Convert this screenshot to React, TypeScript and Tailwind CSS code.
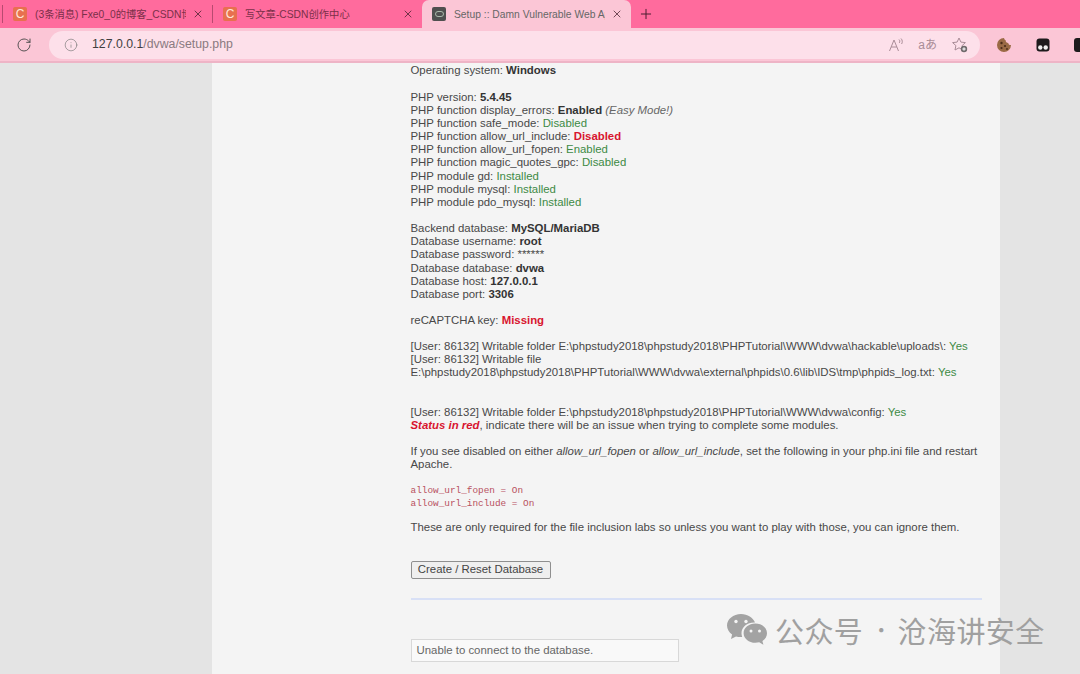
import { RotateCw, Info, X, Plus } from 'lucide-react'

const good = 'text-[#3d8a45]'

function Tab({ title, active, kind }: { title: string; active?: boolean; kind: 'csdn' | 'dvwa' }) {
  return (
    <div
      className={`flex h-[28px] w-[209px] items-center pl-[10px] pr-[8px] ${
        active ? 'rounded-t-[7px] bg-[#fbc6d6]' : 'bg-[#ff6b9d]'
      }`}
    >
      {kind === 'csdn' ? (
        <span className="flex h-[14px] w-[14px] shrink-0 items-center justify-center rounded-[2px] bg-[#e8704f] text-[12px] leading-none text-[#ffe8dc]">
          C
        </span>
      ) : (
        <span className="flex h-[14px] w-[14px] shrink-0 items-center justify-center rounded-[2px] bg-[#4f4f4f]">
          <span className="h-[6px] w-[9px] rounded-full border border-[#a9b8a9]" />
        </span>
      )}
      <span className={`ml-[8px] flex-1 overflow-hidden whitespace-nowrap pt-px text-[10.3px] ${active ? 'text-[#666]' : 'text-[#7a3049]'}`}>
        {title}
      </span>
      <X size={12} strokeWidth={1.5} className="ml-[6px] shrink-0 text-[#43202c]" />
    </div>
  )
}

function ReadAloudIcon() {
  return (
    <svg width="16" height="16" viewBox="0 0 16 16" fill="none" stroke="#a98c97" strokeWidth="1">
      <path d="M1.5 14 6 3l4.500 11M3.200 10h5.600" />
      <path d="M11 2.500c1 .9 1 2.300.3 3.400M13 1.500c1.600 1.600 1.600 3.900.6 5.500" />
    </svg>
  )
}

function FavIcon() {
  return (
    <svg width="18" height="18" viewBox="0 0 18 18" fill="none">
      <path d="M8 2l1.900 4.100 4.500.5-3.300 3 .9 4.400L8 11.800 4 14l.9-4.400-3.300-3 4.500-.5z" stroke="#a98c97" strokeWidth="1" />
      <circle cx="13" cy="13" r="3.200" fill="#6f6a6c" />
      <path d="M13 11.300v3.400M11.300 13h3.400" stroke="#fff" strokeWidth="1" />
    </svg>
  )
}

function CookieIcon() {
  return (
    <svg width="16" height="16" viewBox="0 0 16 16">
      <path d="M8 1a7 7 0 1 0 7 7c-1.500.3-2.600-.6-2.800-2C10.700 6 9.600 5 9.700 3.300 8.900 3 8.200 2.200 8 1z" fill="#9a6a45" />
      <circle cx="5.500" cy="6" r="1.200" fill="#4a2c18" />
      <circle cx="9" cy="9" r="1.100" fill="#4a2c18" />
      <circle cx="5.500" cy="11" r="1.100" fill="#4a2c18" />
      <circle cx="11" cy="12" r=".9" fill="#4a2c18" />
    </svg>
  )
}

function GhostIcon() {
  return (
    <svg width="14" height="14" viewBox="0 0 14 14">
      <rect x="0.5" y="0.5" width="13" height="13" rx="3" fill="#1d1a1c" />
      <circle cx="4.300" cy="9.500" r="2.200" fill="#eee" />
      <circle cx="9.700" cy="9.500" r="2.200" fill="#eee" />
    </svg>
  )
}

function WechatIcon() {
  return (
    <svg width="42" height="34" viewBox="0 0 42 34" fill="#a3a3a3">
      <path d="M15 1C7.300 1 1 6.200 1 12.600c0 3.600 2 6.800 5.100 9L5 26l5-2.600c1.500.4 3.200.7 5 .7h1.200c-.5-1.300-.7-2.600-.7-3.800 0-6 5.600-10.700 12.600-10.700h.9C27.200 4.600 21.600 1 15 1z" />
      <path d="M41 20.200c0-5.300-5.300-9.600-11.700-9.600s-11.700 4.300-11.700 9.600 5.300 9.600 11.700 9.600c1.400 0 2.700-.2 3.900-.5l4.200 2.400-1-3.700c2.800-1.800 4.600-4.600 4.600-7.800z" />
      <circle cx="10" cy="8.500" r="1.700" fill="#f4f4f4" />
      <circle cx="20" cy="8.500" r="1.700" fill="#f4f4f4" />
      <circle cx="25" cy="18" r="1.500" fill="#f4f4f4" />
      <circle cx="33.500" cy="18" r="1.500" fill="#f4f4f4" />
    </svg>
  )
}

export default function App() {
  return (
    <div
      className="relative h-[674px] w-[1080px] overflow-hidden bg-[#e4e4e4]"
      style={{ fontFamily: '"Liberation Sans", "Noto Sans CJK SC", sans-serif' }}
    >
      {/* tab strip */}
      <div className="flex h-[28px] bg-[#ff6b9d]">
        <div className="my-[5px] ml-[2px] w-px bg-[#b84a70]" />
        <Tab kind="csdn" title="(3条消息) Fxe0_0的博客_CSDN博客" />
        <div className="my-[5px] w-px bg-[#b84a70]" />
        <Tab kind="csdn" title="写文章-CSDN创作中心" />
        <Tab kind="dvwa" active title="Setup :: Damn Vulnerable Web App" />
        <div className="flex w-[30px] items-center justify-center">
          <Plus size={16} strokeWidth={1.5} className="text-[#4a1f30]" />
        </div>
      </div>

      {/* toolbar */}
      <div className="flex h-[35px] items-center border-b-2 border-[#eeb4c6] bg-[#fbc6d6]">
        <RotateCw size={16} strokeWidth={1.4} className="ml-[16px] shrink-0 text-[#4a4a4a]" />
        <div className="ml-[17px] flex h-[28px] w-[931px] shrink-0 items-center rounded-full bg-[#fde0ea] pl-[15px] pr-[11px]">
          <Info size={14} strokeWidth={1.1} className="text-[#777]" />
          <span className="ml-[14px] text-[12.300px] text-[#3f3f3f]">
            127.0.0.1<span className="text-[#8a7a80]">/dvwa/setup.php</span>
          </span>
          <div className="ml-auto flex items-center gap-[14px]">
            <ReadAloudIcon />
            <span className="text-[12px] leading-none text-[#a98c97]">aあ</span>
            <FavIcon />
          </div>
        </div>
        <div className="ml-[16px] flex items-center gap-[24px]">
          <CookieIcon />
          <GhostIcon />
          <div className="h-[14px] w-[14px] shrink-0 rounded-[3px] bg-[#1d1a1c]" />
        </div>
      </div>

      {/* page */}
      <div className="ml-[212px] h-[611px] w-[788px] bg-[#f4f4f4] pl-[198.500px] pr-[18px] pt-[1px] text-[11.4px] leading-[13.15px] text-[#484848]">
        <div>
          Operating system: <b className="text-[#333]">Windows</b>
        </div>
        <div className="mt-[13.500px]">
          PHP version: <b className="text-[#333]">5.4.45</b>
          <br />
          PHP function display_errors: <b className="text-[#333]">Enabled</b> <i className="text-[#666]">(Easy Mode!)</i>
          <br />
          PHP function safe_mode: <span className={good}>Disabled</span>
          <br />
          PHP function allow_url_include: <b className="text-[#d8152f]">Disabled</b>
          <br />
          PHP function allow_url_fopen: <span className={good}>Enabled</span>
          <br />
          PHP function magic_quotes_gpc: <span className={good}>Disabled</span>
          <br />
          PHP module gd: <span className={good}>Installed</span>
          <br />
          PHP module mysql: <span className={good}>Installed</span>
          <br />
          PHP module pdo_mysql: <span className={good}>Installed</span>
        </div>
        <div className="mt-[13px]">
          Backend database: <b className="text-[#333]">MySQL/MariaDB</b>
          <br />
          Database username: <b className="text-[#333]">root</b>
          <br />
          Database password: ******
          <br />
          Database database: <b className="text-[#333]">dvwa</b>
          <br />
          Database host: <b className="text-[#333]">127.0.0.1</b>
          <br />
          Database port: <b className="text-[#333]">3306</b>
        </div>
        <div className="mt-[13px]">
          reCAPTCHA key: <b className="text-[#d8152f]">Missing</b>
        </div>
        <div className="mt-[13px]">
          [User: 86132] Writable folder E:\phpstudy2018\phpstudy2018\PHPTutorial\WWW\dvwa\hackable\uploads\: <span className={good}>Yes</span>
          <br />
          [User: 86132] Writable file
          <br />
          E:\phpstudy2018\phpstudy2018\PHPTutorial\WWW\dvwa\external\phpids\0.6\lib\IDS\tmp\phpids_log.txt: <span className={good}>Yes</span>
        </div>
        <div className="mt-[26px]">
          [User: 86132] Writable folder E:\phpstudy2018\phpstudy2018\PHPTutorial\WWW\dvwa\config: <span className={good}>Yes</span>
          <br />
          <b className="italic text-[#d8152f]">Status in red</b>, indicate there will be an issue when trying to complete some modules.
        </div>
        <p className="mt-[13px]">
          If you see disabled on either <i>allow_url_fopen</i> or <i>allow_url_include</i>, set the following in your php.ini file and restart Apache.
        </p>
        <pre className="mt-[13px] text-[9.400px] leading-[13.15px] text-[#b8505f]" style={{ fontFamily: '"Liberation Mono", monospace' }}>
          allow_url_fopen = On
          {'\n'}allow_url_include = On
        </pre>
        <p className="mt-[10.500px]">
          These are only required for the file inclusion labs so unless you want to play with those, you can ignore them.
        </p>
        <button className="mt-[26.500px] block h-[18px] w-[140px] rounded-[2px] border border-[#8f8f8f] bg-[#efefef] text-center text-[11.4px] leading-none text-[#444]">
          Create / Reset Database
        </button>
        <div className="mt-[19.500px] h-[1.500px] bg-[#d8e0f6]" />
        <div className="mt-[39.500px] flex h-[23px] w-[268px] items-center border border-[#d8d8d8] bg-[#f9f9f9] px-[5px] text-[#666]">
          Unable to connect to the database.
        </div>
      </div>

      {/* watermark */}
      <div className="absolute left-[726px] top-[613px] flex items-center text-[29px] leading-none tracking-[0.4px] text-[#a0a0a0]" style={{ fontFamily: '"Noto Sans CJK SC", sans-serif' }}>
        <WechatIcon />
        <span className="ml-[7px] whitespace-nowrap">公众号</span>
        <span className="ml-[8px] whitespace-nowrap text-[20px]">·</span>
        <span className="ml-[6px] whitespace-nowrap">沧海讲安全</span>
      </div>
    </div>
  )
}
